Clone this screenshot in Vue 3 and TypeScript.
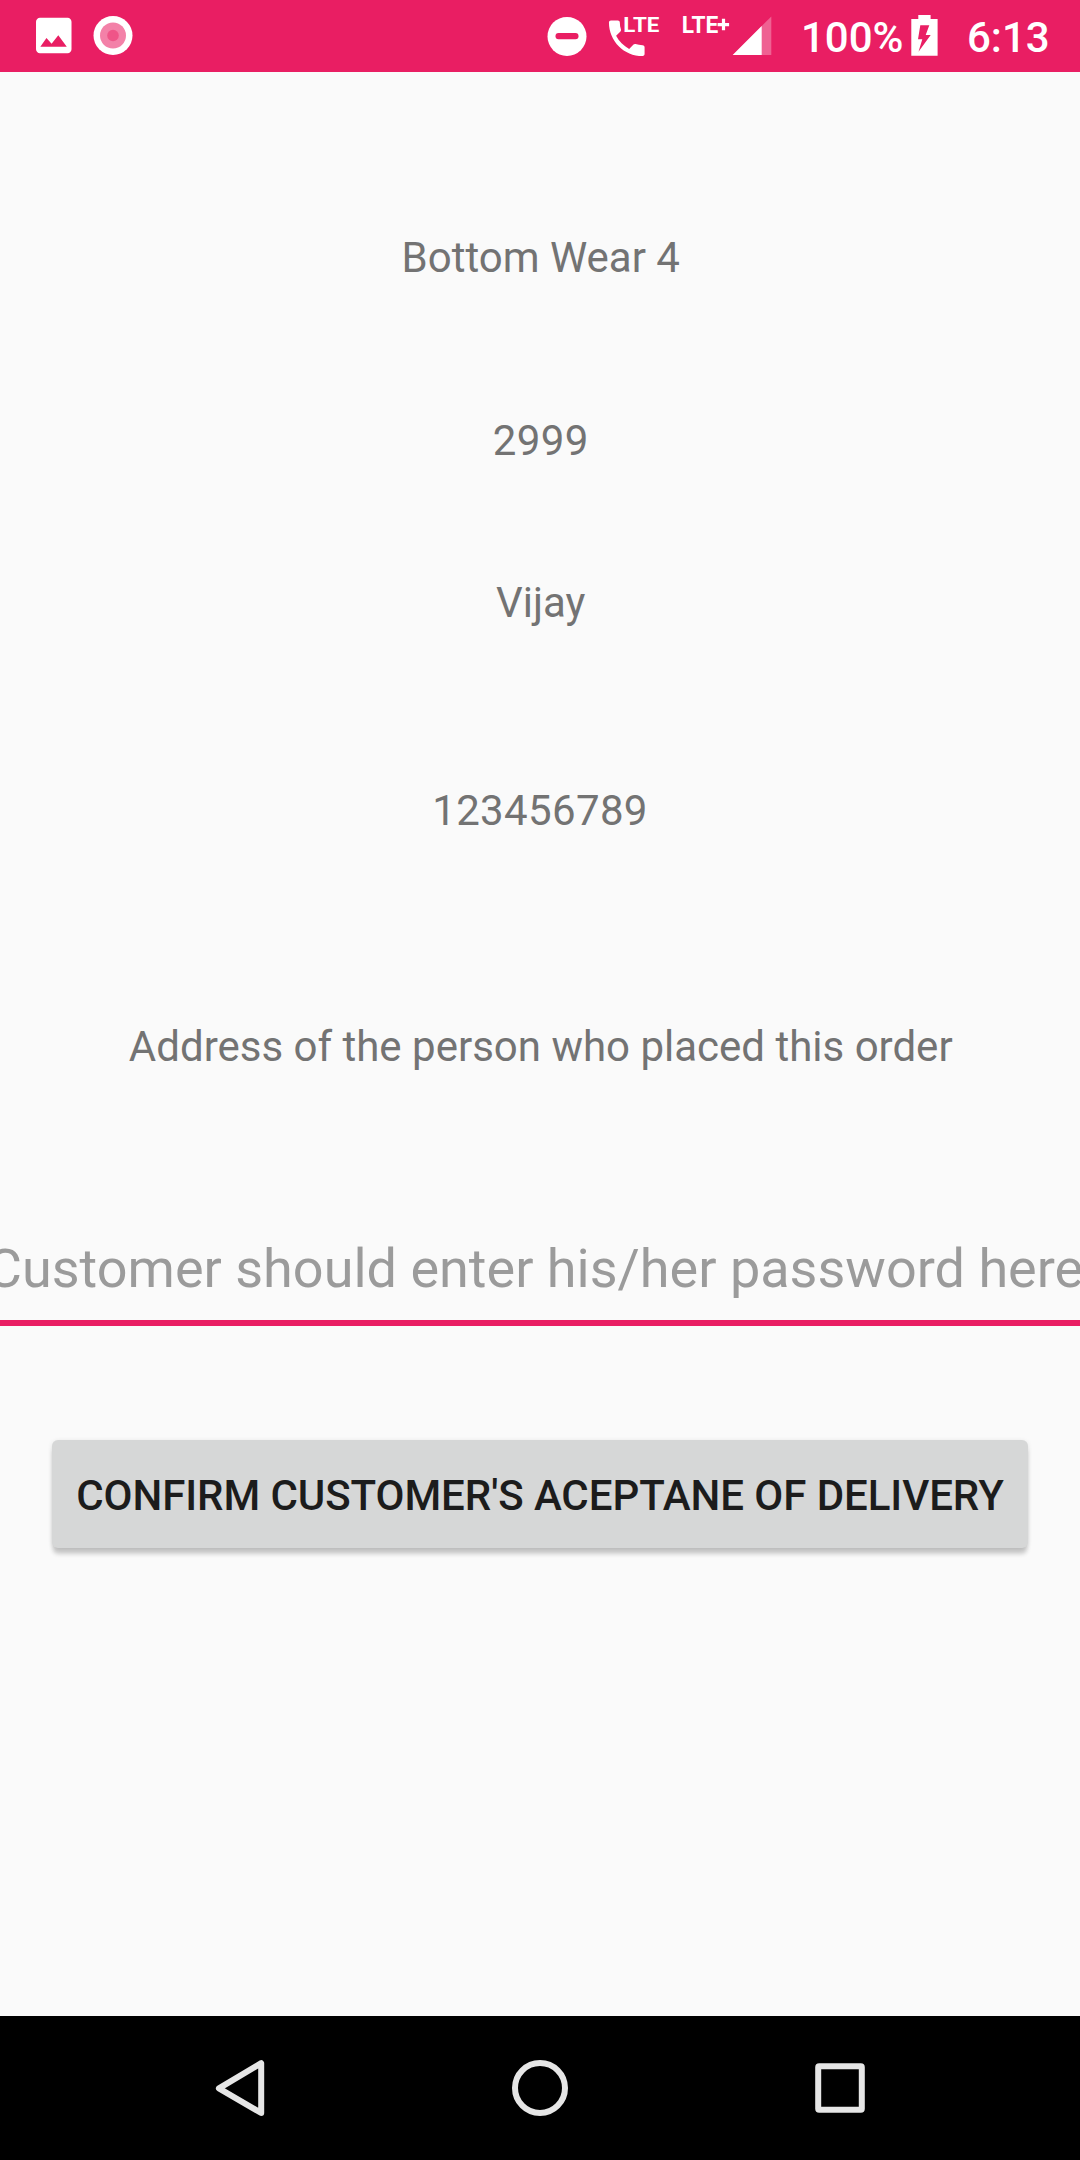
<script setup lang="ts">
interface OrderLine {
  key: string
  text: string
}

const orderLines: OrderLine[] = [
  { key: 'item', text: 'Bottom Wear 4' },
  { key: 'price', text: '2999' },
  { key: 'name', text: 'Vijay' },
  { key: 'phone', text: '123456789' },
  { key: 'address', text: 'Address of the person who placed this order' },
]
</script>

<template>
  <div class="screen">
    <header class="status">
      <svg class="ic-image" width="48" height="72" viewBox="0 0 48 72">
        <path
          transform="translate(0.1 11.9) scale(1.972)"
          fill="#fff"
          d="M21 19V5c0-1.100-.9-2-2-2H5c-1.100 0-2 .9-2 2v14c0 1.100.9 2 2 2h14c1.100 0 2-.9 2-2zM8.300 13.200l2.600 2.900L14.300 11.800l4.300 5.900H5.200z"
        />
      </svg>
      <svg class="ic-record" width="40" height="72" viewBox="0 0 40 72">
        <circle cx="20" cy="35.500" r="19.500" fill="#fff" />
        <circle cx="20" cy="35.500" r="13" fill="#f381a8" />
        <circle cx="20" cy="35.500" r="5.800" fill="#ef5588" />
      </svg>
      <span class="grow"></span>
      <svg class="ic-dnd" width="40" height="72" viewBox="0 0 40 72">
        <circle cx="20" cy="36.400" r="19.500" fill="#fff" />
        <rect x="8.500" y="33" width="23" height="6.200" rx="3" fill="#e91e63" />
      </svg>
      <svg class="ic-call" width="56" height="72" viewBox="0 0 56 72">
        <path
          transform="translate(-3 14.500) scale(1.980)"
          fill="#fff"
          d="M6.620 10.790c1.440 2.830 3.760 5.140 6.590 6.590l2.200-2.200c.27-.27.67-.36 1.020-.24 1.120.37 2.330.57 3.570.57.55 0 1 .45 1 1V20c0 .55-.45 1-1 1-9.390 0-17-7.610-17-17 0-.55.45-1 1-1h3.500c.55 0 1 .45 1 1 0 1.250.2 2.450.57 3.570.11.35.03.74-.25 1.020l-2.200 2.200z"
        />
        <text x="17.300" y="32.200" class="lte" font-size="21" textLength="36" lengthAdjust="spacingAndGlyphs">LTE</text>
      </svg>
      <svg class="ic-signal" width="92" height="72" viewBox="0 0 92 72">
        <text x="1.700" y="33.200" class="lte" font-size="24.500" textLength="36.500" lengthAdjust="spacingAndGlyphs">LTE</text>
        <path d="M37.600 24.600h11.500M43.500 18.800v11.500" stroke="#fff" stroke-width="3.200" />
        <path d="M52.700 55L91.300 16.500V55z" fill="#fff" fill-opacity=".3" />
        <path d="M52.700 55L81.700 26.100V55z" fill="#fff" />
      </svg>
      <span class="percent">100%</span>
      <svg class="ic-battery" width="28" height="72" viewBox="0 0 28 72">
        <path
          fill="#fff"
          fill-rule="evenodd"
          d="M8.300 15h12.300v4h7v36.700H1.300V19h7zM10.300 25.300l-2.300 14h4.300L8.500 51.700 20.700 35h-5l3.600-9.700z"
        />
      </svg>
      <span class="clock">6:13</span>
    </header>

    <main class="content">
      <p v-for="line in orderLines" :key="line.key" class="line" :class="line.key">{{ line.text }}</p>
      <div class="field"><span>Customer should enter his/her password here</span></div>
      <button class="confirm" type="button">CONFIRM CUSTOMER'S ACEPTANE OF DELIVERY</button>
    </main>

    <nav class="nav">
      <svg width="60" height="60" viewBox="0 0 60 60">
        <path d="M8.900 30.300L51.200 5.200v49.800z" class="stroke" stroke-linejoin="round" />
      </svg>
      <svg width="60" height="60" viewBox="0 0 60 60">
        <circle cx="30" cy="30" r="25" class="stroke" />
      </svg>
      <svg width="60" height="60" viewBox="0 0 60 60">
        <rect x="8.200" y="8.200" width="43.600" height="43.600" rx="1" class="stroke" />
      </svg>
    </nav>
  </div>
</template>

<style>
body {
  margin: 0;
  background: #fafafa;
}
</style>

<style scoped>
.screen {
  display: flex;
  flex-direction: column;
  width: 1080px;
  height: 2160px;
  overflow: hidden;
  background: #fafafa;
  font-family: Roboto, "Noto Sans", sans-serif;
}
.status {
  display: flex;
  flex: none;
  height: 72px;
  background: #e91e63;
  color: #fff;
  font-size: 42px;
  font-weight: 500;
  line-height: 76px;
  white-space: nowrap;
}
.status svg {
  flex: none;
}
.grow {
  flex: 1;
}
.lte {
  fill: #fff;
  font-family: Roboto, sans-serif;
  font-weight: 700;
}
.ic-image {
  margin-left: 30px;
}
.ic-record {
  margin-left: 14.500px;
}
.ic-call {
  margin-left: 19.500px;
}
.ic-signal {
  margin-left: 18px;
}
.percent {
  width: 109px;
  margin-left: 29px;
}
.clock {
  width: 113px;
  margin-left: 29px;
}
.content {
  display: flex;
  flex: 1;
  flex-direction: column;
  align-items: center;
}
.line {
  margin: 0;
  padding-left: 1.500px;
  color: #737373;
  font-size: 42px;
  line-height: 50px;
  white-space: nowrap;
}
.item {
  margin-top: 161px;
}
.price {
  margin-top: 133px;
  letter-spacing: 0.35px;
}
.name {
  margin-top: 112px;
}
.phone {
  margin-top: 158px;
  padding-left: 0;
  letter-spacing: 0.35px;
}
.address {
  margin-top: 186px;
}
.field {
  display: flex;
  box-sizing: border-box;
  justify-content: center;
  width: 1080px;
  height: 90px;
  margin-top: 164px;
  padding: 1px 10px 0 0;
  border-bottom: 6px solid #e91e63;
  color: #9b9b9b;
  font-size: 54px;
  line-height: 64px;
  white-space: nowrap;
}
.confirm {
  width: 976px;
  height: 108px;
  margin: 114px 0 0;
  padding: 3px 0 0;
  border: 0;
  border-radius: 6px;
  background: #d6d7d7;
  box-shadow: 0 7px 4px -1px rgba(0, 0, 0, 0.19), 0 1px 5px rgba(0, 0, 0, 0.1);
  color: #1c1c1c;
  font-family: inherit;
  font-size: 42px;
  font-weight: 500;
  letter-spacing: -0.06px;
  line-height: 50px;
  white-space: nowrap;
}
.nav {
  display: flex;
  flex: none;
  align-items: center;
  justify-content: center;
  gap: 240px;
  height: 144px;
  background: #000;
}
.stroke {
  fill: none;
  stroke: #e6e6e6;
  stroke-width: 6;
}
</style>
